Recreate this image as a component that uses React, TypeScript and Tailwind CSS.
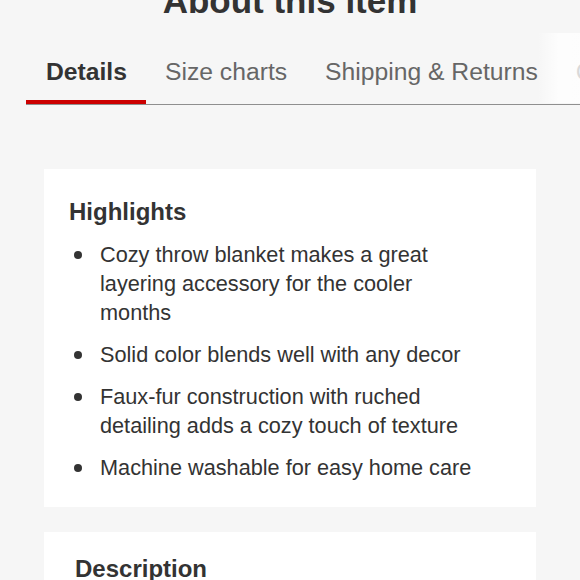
import React from "react";

const tabs = ["Details", "Size charts", "Shipping & Returns", "Care"];

const highlights = [
  "Cozy throw blanket makes a great layering accessory for the cooler months",
  "Solid color blends well with any decor",
  "Faux-fur construction with ruched detailing adds a cozy touch of texture",
  "Machine washable for easy home care",
];

export default function App() {
  return (
    <div className="relative h-[580px] w-[580px] overflow-hidden bg-[#f6f6f6] font-['Liberation_Sans',Arial,sans-serif] text-[#333]">
      <h2 className="-mt-[17px] text-center text-[35px] font-bold leading-[35px] text-[#333]">
        About this item
      </h2>

      <div className="relative">
        <div className="ml-[26px] flex whitespace-nowrap border-b border-[#8f8f8f]">
          {tabs.map((t, i) => (
            <div
              key={t}
              className={
                i === 0
                  ? "border-b-4 border-[#cc0000] pb-[13px] pl-[20px] pr-[19px] pt-[39px] text-[24.7px] font-bold leading-[30px] text-[#333]"
                  : "border-b-4 border-transparent px-[19px] pb-[13px] pt-[39px] text-[24.7px] leading-[30px] text-[#666]"
              }
            >
              {t}
            </div>
          ))}
        </div>
        {/* fade over the scrolled tabs */}
        <div className="absolute right-0 top-[15px] h-[70px] w-[42px] bg-gradient-to-r from-[#f6f6f6]/0 via-white/80 to-white/75" />
      </div>

      <div className="mx-[44px] mt-[64px] bg-white pb-[25px] pl-[25px] pt-[28px]">
        <h3 className="text-[24px] font-bold leading-[30px]">Highlights</h3>
        <ul className="mt-[13px] flex flex-col gap-[13px]">
          {highlights.map((h) => (
            <li key={h} className="flex">
              <span className="ml-[5px] mt-[11px] h-[8px] w-[8px] shrink-0 rounded-full bg-[#333]" />
              <span className="ml-[18px] w-[385px] text-[21.7px] leading-[29px]">{h}</span>
            </li>
          ))}
        </ul>
      </div>

      <div className="mx-[44px] mt-[25px] h-[200px] bg-white pl-[31px] pt-[22px]">
        <h3 className="text-[24px] font-bold leading-[30px]">Description</h3>
      </div>
    </div>
  );
}
